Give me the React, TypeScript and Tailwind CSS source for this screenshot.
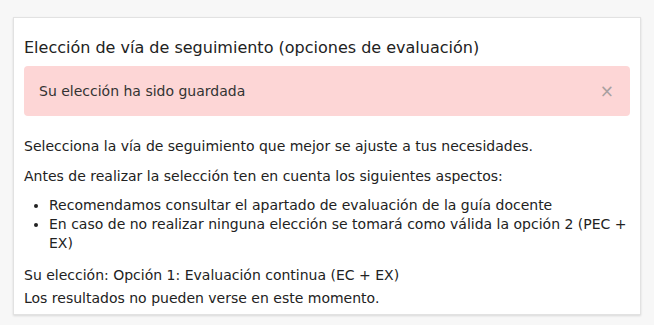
import React from "react";

export default function App() {
  return (
    <div className="min-h-[325px] w-full bg-[#f7f7f7] pt-[17px] pl-[13px] pr-[13px] font-['DejaVu_Sans',Verdana,sans-serif] text-[14px] text-[#222]">
      <div className="w-[628px] border border-[#e2e2e2] bg-white px-[10px] pt-[19px] pb-[4px] shadow-[0_1px_2px_rgba(0,0,0,0.12)]">
        <h2 className="text-[16px] leading-[22px] text-[#222]">
          Elección de vía de seguimiento (opciones de evaluación)
        </h2>
        <div className="mt-[7px] flex h-[50px] items-center justify-between rounded-[4px] bg-[#fdd6d6] pl-[15px] pr-[16px]">
          <p className="leading-[18px] text-[#333]">Su elección ha sido guardada</p>
          <button className="text-[17px] leading-none text-[#a8a0a0]">×</button>
        </div>
        <p className="mt-[21px] leading-[18px]">
          Selecciona la vía de seguimiento que mejor se ajuste a tus necesidades.
        </p>
        <p className="mt-[12px] leading-[18px]">
          Antes de realizar la selección ten en cuenta los siguientes aspectos:
        </p>
        <ul className="mt-[11px] list-disc pl-[25px] leading-[19px]">
          <li>Recomendamos consultar el apartado de evaluación de la guía docente</li>
          <li>
            En caso de no realizar ninguna elección se tomará como válida la opción 2 (PEC + EX)
          </li>
        </ul>
        <p className="mt-[11px] leading-[23px]">
          Su elección: Opción 1: Evaluación continua (EC + EX)
          <br />
          Los resultados no pueden verse en este momento.
        </p>
      </div>
    </div>
  );
}
